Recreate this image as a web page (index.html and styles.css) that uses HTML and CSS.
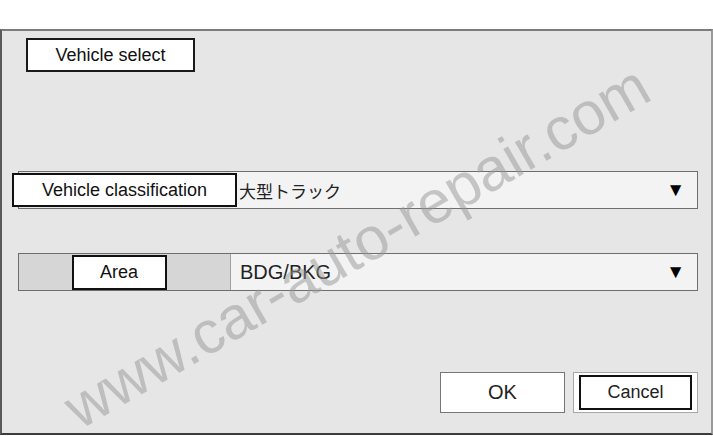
FILE: index.html
```html
<!DOCTYPE html>
<html lang="en">
<head>
  <meta charset="UTF-8" />
  <title>Vehicle select</title>
  <link rel="stylesheet" href="styles.css">
</head>
<body>
  <div class="dialog">
    <div class="title-box">Vehicle select</div>

    <div class="field field-first">
      <div class="field-label boxed">Vehicle classification</div>
      <div class="field-value">
        <span class="value-text jp">大型トラック</span>
        <span class="arrow">▼</span>
      </div>
    </div>

    <div class="field field-second">
      <div class="field-label gray">
        <div class="area-box">Area</div>
      </div>
      <div class="field-value">
        <span class="value-text">BDG/BKG</span>
        <span class="arrow">▼</span>
      </div>
    </div>

    <div class="actions">
      <button class="btn btn-ok">OK</button>
      <button class="btn btn-cancel"><span>Cancel</span></button>
    </div>

    <div class="watermark">www.car-auto-repair.com</div>
  </div>
</body>
</html>
```

FILE: styles.css
```css
body {
  margin: 0;
  padding: 29px 0 0;
  background-color: #ffffff;
  font-family: "Liberation Sans", Arial, sans-serif;
  color: #111;
}

.dialog {
  position: relative;
  box-sizing: border-box;
  width: 713px;
  height: 406px;
  background-color: #e6e6e6;
  border-top: 2px solid #7c7c7c;
  border-left: 2px solid #5a5a5a;
  border-right: 2px solid #9a9a9a;
  border-bottom: 2px solid #3c3c3c;
  display: flex;
  flex-direction: column;
}

.title-box {
  box-sizing: border-box;
  width: 169px;
  height: 34px;
  margin: 7px 0 0 24px;
  background-color: #fff;
  border: 2px solid #1a1a1a;
  display: flex;
  align-items: center;
  justify-content: center;
  font-size: 18px;
}

.field {
  box-sizing: border-box;
  height: 38px;
  margin: 0 13px 0 16px;
  border: 1px solid #6e6e6e;
  display: flex;
}

.field-first {
  margin-top: 99px;
}

.field-second {
  margin-top: 44px;
}

.field-label {
  box-sizing: border-box;
  flex: 0 0 212px;
  display: flex;
  align-items: center;
  justify-content: center;
  font-size: 18px;
}

.field-label.boxed {
  flex-basis: 225px;
  height: 34px;
  margin: 1px -6px 0 -7px;
  background-color: #fff;
  border: 2px solid #111;
  position: relative;
  z-index: 1;
}

.field-label.gray {
  background-color: #d6d6d6;
  border-right: 1px solid #a0a0a0;
  padding-right: 11px;
}

.area-box {
  box-sizing: border-box;
  width: 95px;
  height: 35px;
  background-color: #fff;
  border: 2px solid #111;
  display: flex;
  align-items: center;
  justify-content: center;
}

.field-value {
  flex: 1;
  background-color: #f3f3f3;
  display: flex;
  align-items: center;
  justify-content: space-between;
  padding: 0 12px 0 9px;
}

.field-first .field-value {
  padding-left: 8px;
}

.value-text {
  font-size: 20px;
  color: #222;
}

.value-text.jp {
  font-family: "Noto Sans CJK JP", sans-serif;
  font-size: 17px;
}

.arrow {
  font-size: 19px;
  color: #000;
}

.actions {
  display: flex;
  justify-content: flex-end;
  gap: 8px;
  margin: 81px 13px 0 0;
}

.btn {
  box-sizing: border-box;
  width: 125px;
  height: 41px;
  padding: 0;
  background-color: #fff;
  font-family: "Liberation Sans", Arial, sans-serif;
  font-size: 20px;
  color: #222;
  display: flex;
  align-items: center;
  justify-content: center;
}

.btn-ok {
  border: 1px solid #777;
}

.btn-cancel {
  border: 1px solid #a8a8a8;
  padding: 2px 5px;
}

.btn-cancel span {
  box-sizing: border-box;
  width: 100%;
  height: 100%;
  border: 2px solid #111;
  display: flex;
  align-items: center;
  justify-content: center;
  font-size: 18px;
}

.watermark {
  position: absolute;
  left: 50%;
  top: 216px;
  transform: translate(-50%, -50%) rotate(-30deg);
  white-space: nowrap;
  font-size: 60px;
  line-height: 1;
  color: rgba(150, 150, 150, 0.5);
  pointer-events: none;
  z-index: 2;
}
```
